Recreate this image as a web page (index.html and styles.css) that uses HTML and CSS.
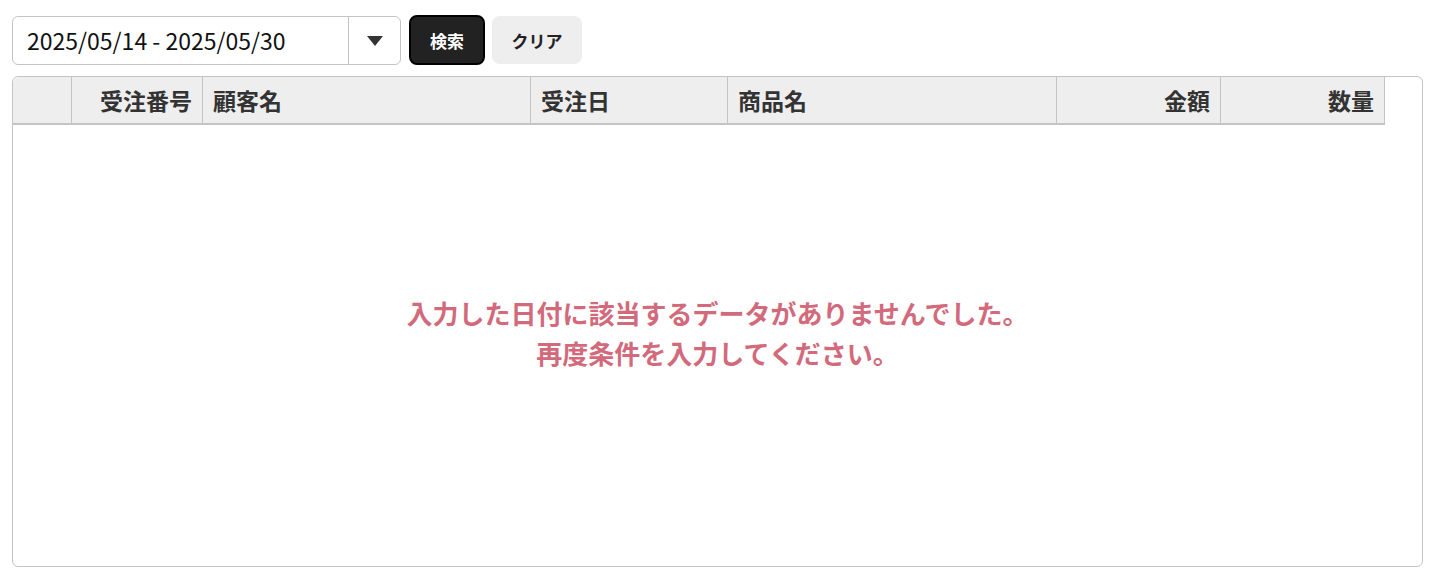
FILE: index.html
```html
<!DOCTYPE html>
<html lang="ja">
<head>
<meta charset="utf-8">
<title>受注検索</title>
<link rel="stylesheet" href="styles.css">
</head>
<body>
<div class="page">
  <div class="controls">
    <div class="date-select">
      <div class="date-value">2025/05/14 - 2025/05/30</div>
      <div class="date-toggle"><span class="caret"></span></div>
    </div>
    <button class="btn btn-search">検索</button>
    <button class="btn btn-clear">クリア</button>
  </div>
  <div class="grid">
    <div class="grid-header">
      <div class="hcell c-sel"></div>
      <div class="hcell c-no right">受注番号</div>
      <div class="hcell c-cust">顧客名</div>
      <div class="hcell c-date">受注日</div>
      <div class="hcell c-item">商品名</div>
      <div class="hcell c-amt right">金額</div>
      <div class="hcell c-qty right">数量</div>
    </div>
    <div class="grid-body">
      <p class="empty">入力した日付に該当するデータがありませんでした。<br>再度条件を入力してください。</p>
    </div>
  </div>
</div>
</body>
</html>
```

FILE: styles.css
```css
* { box-sizing: border-box; }
html, body { margin: 0; padding: 0; background: #fff; }
body {
  font-family: "Noto Sans CJK JP", "Noto Sans", sans-serif;
  color: #222;
}
.page {
  padding: 15px 16px 16px 12px;
}
.controls {
  display: flex;
  align-items: center;
  gap: 7px;
  height: 50px;
  margin-bottom: 11px;
}
.date-select {
  display: flex;
  width: 389px;
  height: 49px;
  margin-right: 1px;
  border: 1.5px solid #c4c4c4;
  border-radius: 6px;
  background: #fff;
}
.date-value {
  flex: 1;
  display: flex;
  align-items: center;
  padding-left: 14px;
  font-size: 23px;
  color: #111;
}
.date-toggle {
  width: 52px;
  border-left: 1.5px solid #c4c4c4;
  display: flex;
  align-items: center;
  justify-content: center;
}
.caret {
  width: 0;
  height: 0;
  border-left: 8px solid transparent;
  border-right: 8px solid transparent;
  border-top: 10px solid #333;
  margin-top: 2px;
}
.btn {
  font-family: "Noto Sans CJK JP", "Noto Sans", sans-serif;
  font-weight: 700;
  font-size: 17px;
  height: 50px;
  border-radius: 8px;
  padding: 0;
  cursor: pointer;
}
.btn-search {
  width: 76px;
  background: #222;
  color: #fff;
  border: 2px solid #000;
}
.btn-clear {
  width: 90px;
  height: 48px;
  background: #eeeeee;
  color: #222;
  border: none;
}
.grid {
  width: 1411px;
  height: 491px;
  border: 1.5px solid #c4c4c4;
  border-radius: 6px;
  overflow: hidden;
  display: flex;
  flex-direction: column;
}
.grid-header {
  display: flex;
  width: 1372px;
  height: 48px;
  background: #eeeeee;
  border-bottom: 2px solid #c4c4c4;
  border-right: 1.5px solid #c4c4c4;
  flex-shrink: 0;
}
.hcell {
  display: flex;
  align-items: center;
  padding: 0 10px;
  font-size: 23px;
  font-weight: 700;
  color: #333;
  border-right: 1.5px solid #c4c4c4;
}
.hcell:last-child { border-right: none; }
.hcell.right { justify-content: flex-end; }
.c-sel { width: 59px; }
.c-no { width: 131px; }
.c-cust { width: 328px; }
.c-date { width: 197px; }
.c-item { width: 329px; }
.c-amt { width: 164px; }
.c-qty { width: 163px; }
.grid-body {
  flex: 1;
  display: flex;
  align-items: center;
  justify-content: center;
}
.empty {
  margin: 0 0 26px 0;
  text-align: center;
  font-size: 26px;
  line-height: 40px;
  font-weight: 700;
  color: #d26a7c;
}
```
